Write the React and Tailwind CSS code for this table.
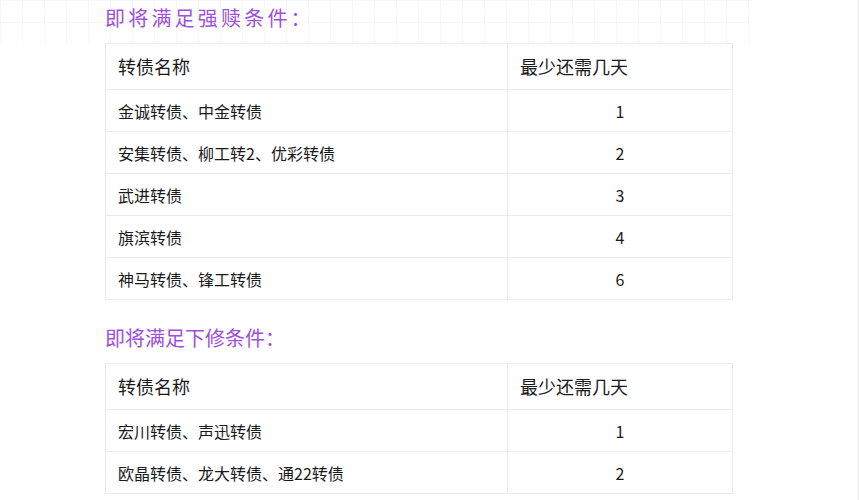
const REDEEM = [
  { names: '金诚转债、中金转债', days: 1 },
  { names: '安集转债、柳工转2、优彩转债', days: 2 },
  { names: '武进转债', days: 3 },
  { names: '旗滨转债', days: 4 },
  { names: '神马转债、锋工转债', days: 6 },
];

const REVISE = [
  { names: '宏川转债、声迅转债', days: 1 },
  { names: '欧晶转债、龙大转债、通22转债', days: 2 },
];

function BondTable({ rows }) {
  return (
    <table className="ml-[105px] w-[627px] table-fixed border-collapse text-[#1a1a1a]">
      <colgroup>
        <col className="w-[402px]" />
        <col className="w-[225px]" />
      </colgroup>
      <thead>
        <tr className="h-[46px]">
          <th className="border border-[#ebebeb] px-3 text-left text-[18px] font-normal">转债名称</th>
          <th className="border border-[#ebebeb] px-3 text-left text-[18px] font-normal">最少还需几天</th>
        </tr>
      </thead>
      <tbody>
        {rows.map((r) => (
          <tr key={r.names} className="h-[42px]">
            <td className="border border-[#ebebeb] px-3 text-[16px]">{r.names}</td>
            <td className="border border-[#ebebeb] px-3 text-center text-[16px]">{r.days}</td>
          </tr>
        ))}
      </tbody>
    </table>
  );
}

export default function App() {
  return (
    <div
      className="w-[859px] min-h-[500px] bg-white border-r border-[#ececec]"
      style={{ fontFamily: '"Noto Sans CJK SC", "Noto Sans", sans-serif' }}
    >
      <div className="w-[752px] h-[43px] pt-[3px] pl-[105px] bg-[linear-gradient(to_right,#f7f7f7_1px,transparent_1px),linear-gradient(to_bottom,#f7f7f7_1px,transparent_1px)] bg-size-[22px_22px]">
        <h2 className="h-[30px] leading-[30px] text-[20px] tracking-[3.2px] text-[#9d4fdc]">即将满足强赎条件：</h2>
      </div>
      <BondTable rows={REDEEM} />
      <h2 className="mt-[23px] mb-[10px] ml-[105px] h-[30px] leading-[30px] text-[20px] text-[#9d4fdc]">即将满足下修条件：</h2>
      <BondTable rows={REVISE} />
    </div>
  );
}
